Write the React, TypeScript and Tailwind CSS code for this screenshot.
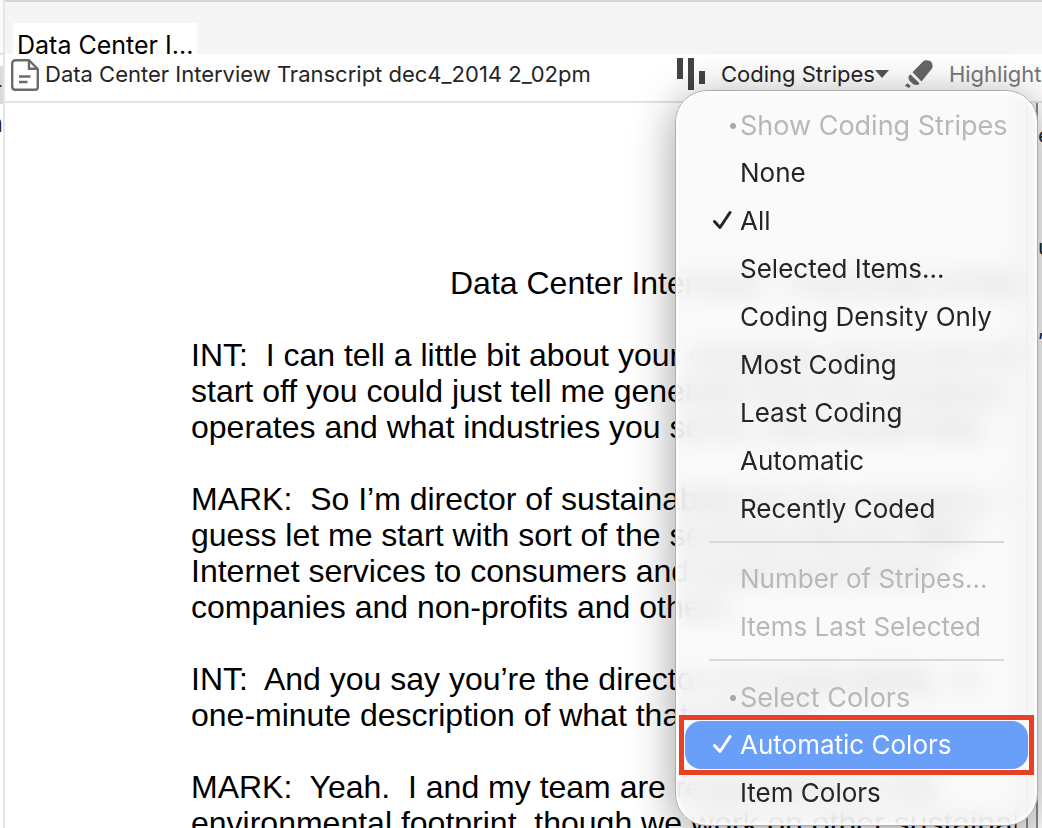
import React from 'react';

type MenuEntry = {
  label: string;
  kind?: 'header' | 'item' | 'disabled';
  checked?: boolean;
  active?: boolean;
};

const menuGroups: MenuEntry[][] = [
  [
    { label: 'Show Coding Stripes', kind: 'header' },
    { label: 'None' },
    { label: 'All', checked: true },
    { label: 'Selected Items...' },
    { label: 'Coding Density Only' },
    { label: 'Most Coding' },
    { label: 'Least Coding' },
    { label: 'Automatic' },
    { label: 'Recently Coded' },
  ],
  [
    { label: 'Number of Stripes...', kind: 'disabled' },
    { label: 'Items Last Selected', kind: 'disabled' },
  ],
  [
    { label: 'Select Colors', kind: 'header' },
    { label: 'Automatic Colors', checked: true, active: true },
    { label: 'Item Colors' },
  ],
];

const paragraphs: string[][] = [
  [
    'INT:  I can tell a little bit about your company, but to sort of',
    'start off you could just tell me generally how the company',
    'operates and what industries you serve, that would help.',
  ],
  [
    'MARK:  So I’m director of sustainability for the company. I',
    'guess let me start with sort of the services that we offer:',
    'Internet services to consumers and small businesses,',
    'companies and non-profits and others.',
  ],
  [
    'INT:  And you say you’re the director of sustainability.  A',
    'one-minute description of what that means?',
  ],
  [
    'MARK:  Yeah.  I and my team are responsible for the',
    'environmental footprint, though we work on other sustainable',
  ],
];

const DocumentIcon = () => (
  <svg width="28" height="32" viewBox="0 0 28 32" fill="none" stroke="#6b6b6b" strokeWidth="2.400">
    <path d="M4.500 1.200h13.500l8.800 9V28a2.800 2.800 0 0 1-2.800 2.800H4.500A3.200 3.200 0 0 1 1.200 28V4.500a3.300 3.300 0 0 1 3.300-3.300z" />
    <path d="M18 1.500v8.200h8.500" />
    <path d="M8 17.500h11.500M8 23h8.500" />
  </svg>
);

const StripesIcon = () => (
  <svg width="28" height="32" viewBox="0 0 28 32" fill="#444">
    <path d="M0 0h6v21H0zM11 0h6v32h-6zM22 13h6v13h-6z" />
  </svg>
);

const HighlighterIcon = () => (
  <svg width="28" height="28" viewBox="0 0 28 28" fill="#666">
    <path d="M18 1.500a4.500 4.500 0 0 1 3.500-1.300l3 .6a4 4 0 0 1 2.700 3l.4 2a4.500 4.500 0 0 1-1 3.300L16.500 21.500 7.500 12.300z" />
    <path d="M5.300 14.300l9.200 9-1.500 1.700-4.500-.4-4.500-4.300-.6-3.500zM2.500 23.300l3.200 2.700-1.800 2L0 25.800z" />
  </svg>
);

const CheckIcon = () => (
  <svg width="20" height="20" viewBox="0 0 20 20" fill="none" stroke="currentColor" strokeWidth="3" strokeLinecap="round" strokeLinejoin="round">
    <path d="M2.500 11.500L8 17.500 18 2.500" />
  </svg>
);

const MenuRow = ({ label, kind = 'item', checked, active }: MenuEntry) => {
  if (kind === 'header') {
    return (
      <div className="flex h-12 items-center pt-0.5 text-[27px] text-[#b8b8b8]">
        <span className="flex w-[55px] justify-end pr-1">
          <span className="size-1.5 rounded-full bg-[#a8a8a8]" />
        </span>
        {label}
      </div>
    );
  }

  const row = (
    <button
      type="button"
      role="menuitem"
      disabled={kind === 'disabled'}
      className={`flex h-12 w-full items-center rounded-2xl pb-0.5 text-left ${
        active ? 'bg-[#6a9ff9] text-white' : kind === 'disabled' ? 'text-[#b8b8b8]' : 'text-[#252525]'
      }`}
    >
      <span className="flex w-[55px] justify-end pr-2">{checked && <CheckIcon />}</span>
      {label}
    </button>
  );

  if (active) {
    return <div className="-mx-1.5 -my-1.5 border-5 border-[#e94025] bg-[#f9f9f9] p-px">{row}</div>;
  }
  return row;
};

const StripesMenu = () => (
  <div
    role="menu"
    className="absolute -left-0.5 top-full z-10 w-[363px] rounded-[32px] border border-[#adadad] bg-[#f9f9f9]/80 px-[9px] pt-2.5 pb-2 text-[26px] whitespace-nowrap shadow-[0_8px_44px_rgba(0,0,0,0.38),inset_0_0_3px_2px_#fff] backdrop-blur-[12px]"
  >
    {menuGroups.map((group, index) => (
      <React.Fragment key={index}>
        {index > 0 && <hr className="mx-6 mt-2 mb-3 border-t-2 border-[#d9d9d9]" />}
        {group.map(entry => (
          <MenuRow key={entry.label} {...entry} />
        ))}
      </React.Fragment>
    ))}
  </div>
);

const Toolbar = () => (
  <div className="relative z-10 flex h-[49px] items-start border-b-2 border-[#e2e2e2] bg-white pl-1.5 text-[22px] whitespace-nowrap text-[#252525]">
    <div className="flex w-[666px] shrink-0 items-center gap-1.5 pt-1">
      <DocumentIcon />
      <span>Data Center Interview Transcript dec4_2014 2_02pm</span>
    </div>
    <div className="relative h-9 shrink-0">
      <button type="button" aria-haspopup="menu" className="flex h-10 items-center gap-4">
        <StripesIcon />
        <span className="flex items-center">
          Coding Stripes
          <svg width="14" height="8" viewBox="0 0 14 8" fill="#555">
            <path d="M0 0h14L7 8z" />
          </svg>
        </span>
      </button>
      <StripesMenu />
    </div>
    <button type="button" className="flex h-10 shrink-0 items-center gap-4 pl-4 text-[#777]">
      <HighlighterIcon />
      Highlight
    </button>
  </div>
);

const Transcript = () => (
  <article className="min-w-0 flex-1 overflow-hidden pt-[162px] pl-[186px] font-['Liberation_Sans',Arial,sans-serif] text-[32px] leading-9 whitespace-pre text-black">
    <h1 className="mb-9 pl-[259px]">Data Center Interview:  Transcript of Mark</h1>
    {paragraphs.map((lines, index) => (
      <p key={index} className="mb-9">
        {lines.join('\n')}
      </p>
    ))}
  </article>
);

// Only the edge of the neighbouring list is in view
const Sidebar = () => (
  <aside className="flex w-[5px] shrink-0 flex-col overflow-hidden border-r-2 border-[#e5e5e5] bg-white text-[25px] leading-[38px] text-[#252525]">
    <div className="h-[55px] shrink-0 border-b-2 border-[#e2e2e2] bg-[#fafafa]" />
    <div className="mt-[11px] flex h-[38px] shrink-0 justify-end bg-[#dadada]">-</div>
    <div className="flex h-[38px] shrink-0 justify-end">n</div>
  </aside>
);

const StripesPane = () => (
  <section className="flex shrink-0">
    <div className="w-2.5 border-l border-[#8a8a8a] bg-[#f3f3f3]" />
    <div className="w-3 border-x-2 border-[#8a8a8a] bg-[#f3f3f3]" />
    <div className="w-1 overflow-hidden bg-white pt-4 text-[22px] leading-8 text-[#252525]">
      <div>e</div>
      <div className="pt-20">u</div>
      <div className="pt-12">,</div>
    </div>
  </section>
);

const App: React.FC = () => {
  return (
    <div className="flex h-screen overflow-hidden bg-white font-[Inter,sans-serif]">
      <Sidebar />
      <main className="flex min-w-0 flex-1 flex-col">
        <div className="flex h-[54px] shrink-0 items-end overflow-hidden border-t-2 border-[#d5d5d5] bg-[#f5f5f5] pl-2">
          <div className="h-[31px] bg-white px-1 pt-1.5 text-[25px] leading-8">Data Center I...</div>
        </div>
        <Toolbar />
        <div className="flex min-h-0 flex-1">
          <Transcript />
          <StripesPane />
        </div>
      </main>
    </div>
  );
};

export default App;
